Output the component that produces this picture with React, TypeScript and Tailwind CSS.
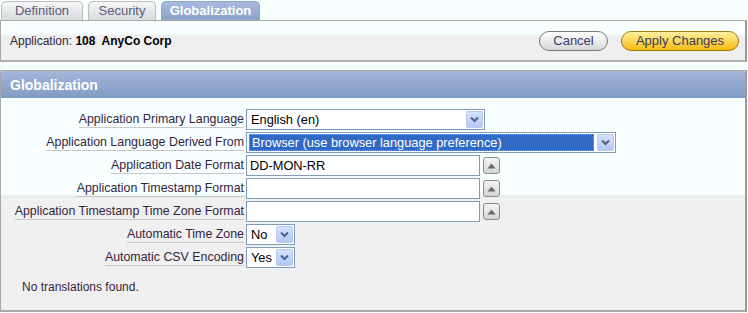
import React from 'react';

const font = { fontFamily: '"Liberation Sans", Arial, sans-serif' };

function Arrow() {
  return (
    <span className="flex h-[17px] w-[17px] shrink-0 items-center justify-center rounded-[2px] border border-[#b9c9ef] bg-[linear-gradient(to_bottom,#d6e2fd,#b4c7f5)]">
      <svg width="9" height="7" viewBox="0 0 9 7">
        <path d="M1 1.5 L4.5 5 L8 1.5" fill="none" stroke="#4d6185" strokeWidth="2" />
      </svg>
    </span>
  );
}

function Select({ value, width, active }: { value: string; width: number; active?: boolean }) {
  return (
    <div
      className="flex h-[21px] items-center border border-[#7f9db9] bg-white pl-[2px] pr-[1px] text-[12.8px]"
      style={{ width }}
    >
      <span
        className={
          active
            ? 'mr-[3px] flex h-[17px] flex-1 items-center border border-dotted border-[#e0a000] bg-[#316ac5] px-[2px] text-white'
            : 'flex-1 px-[2px] text-black'
        }
      >
        {value}
      </span>
      <Arrow />
    </div>
  );
}

function Popup() {
  return (
    <span className="ml-[3px] flex h-[17px] w-[17px] items-center justify-center rounded-[3px] border border-[#8a8a8a] bg-[linear-gradient(to_bottom,#f6f6f6,#d4d4d4)]">
      <svg width="9" height="6" viewBox="0 0 9 6">
        <path d="M0.5 5.5 L4.5 0.5 L8.5 5.5 Z" fill="#6a6a6a" />
      </svg>
    </span>
  );
}

function Input({ value }: { value?: string }) {
  return (
    <div className="flex items-center">
      <div className="flex h-[21px] w-[234px] items-center border border-[#7f9db9] bg-white px-[3px] text-[12.8px] text-black">
        {value}
      </div>
      <Popup />
    </div>
  );
}

function Row({ label, children }: { label: string; children: React.ReactNode }) {
  return (
    <div className="flex h-[23px] items-center">
      <div className="flex w-[245px] justify-end pr-[2px]">
        <span className="border-b border-[#c8c8c8] text-[12.4px] leading-[15px] text-[#35243f]">{label}</span>
      </div>
      {children}
    </div>
  );
}

export default function App() {
  return (
    <div className="h-[313px] w-[748px] overflow-hidden bg-[#f8ffff] text-[12px]" style={font}>
      <div className="flex h-[20px] items-end gap-[5px] pl-[1px]">
        {[
          { t: 'Definition', w: 82 },
          { t: 'Security', w: 68 },
        ].map((tab) => (
          <div
            key={tab.t}
            className="flex h-[19px] items-center justify-center rounded-t-[5px] border border-b-0 border-[#bdbdbd] bg-[linear-gradient(to_bottom,#f6f6f6,#d9dcdc)] text-[13px] text-[#5b5b78]"
            style={{ width: tab.w }}
          >
            {tab.t}
          </div>
        ))}
        <div className="flex h-[19px] w-[99px] items-center justify-center rounded-t-[5px] border border-b-0 border-[#8ea3c8] bg-[linear-gradient(to_bottom,#a9badd,#8aa2c8)] text-[13px] font-bold text-white">
          Globalization
        </div>
      </div>

      <div className="flex h-[42px] w-[747px] items-center justify-between border border-r-2 border-b-2 border-[#a8a8a8] border-r-[#9a9a9a] border-b-[#b0b0b0] bg-[linear-gradient(to_bottom,#f8ffff_0px,#f8ffff_13px,#efefef_14px,#efefef_100%)] pl-[9px] pr-[6px]">
        <div className="text-[#35243f]">
          Application: <b className="text-black">108&nbsp; AnyCo Corp</b>
        </div>
        <div className="flex items-center gap-[13px]">
          <button className="flex h-[20px] w-[69px] items-center justify-center rounded-full border border-[#7a7a7a] bg-[linear-gradient(to_bottom,#ffffff,#d6d8d8)] text-[13px] text-[#3a3a6a]">
            Cancel
          </button>
          <button className="flex h-[20px] w-[118px] items-center justify-center rounded-full border border-[#9c7a10] bg-[linear-gradient(to_bottom,#fff0a0,#f7bc10)] text-[13px] text-[#3a3a5a]">
            Apply Changes
          </button>
        </div>
      </div>

      <div className="mt-[8px] w-[747px] border border-r-2 border-b-2 border-[#a8a8a8] border-r-[#9a9a9a]">
        <div className="flex h-[27px] items-center rounded-t-[2px] bg-[linear-gradient(to_bottom,#a6b6da,#93a8d0_50%,#7f9cc2)] pl-[9px] pt-[2px] text-[14px] font-bold text-white">
          Globalization
        </div>
        <div className="h-[212px] bg-[linear-gradient(to_bottom,#f8ffff_0px,#f8ffff_96px,#e4eaea_99px,#f4f4f4_101px,#f0f0f0_104px,#f0f0f0_100%)] pt-[10px]">
          <Row label="Application Primary Language">
            <Select value="English (en)" width={239} />
          </Row>
          <Row label="Application Language Derived From">
            <Select value="Browser (use browser language preference)" width={370} active />
          </Row>
          <Row label="Application Date Format">
            <Input value="DD-MON-RR" />
          </Row>
          <Row label="Application Timestamp Format">
            <Input />
          </Row>
          <Row label="Application Timestamp Time Zone Format">
            <Input />
          </Row>
          <Row label="Automatic Time Zone">
            <Select value="No" width={49} />
          </Row>
          <Row label="Automatic CSV Encoding">
            <Select value="Yes" width={49} />
          </Row>
          <div className="pl-[21px] pt-[9px] text-[#35243f]">No translations found.</div>
        </div>
      </div>
    </div>
  );
}
